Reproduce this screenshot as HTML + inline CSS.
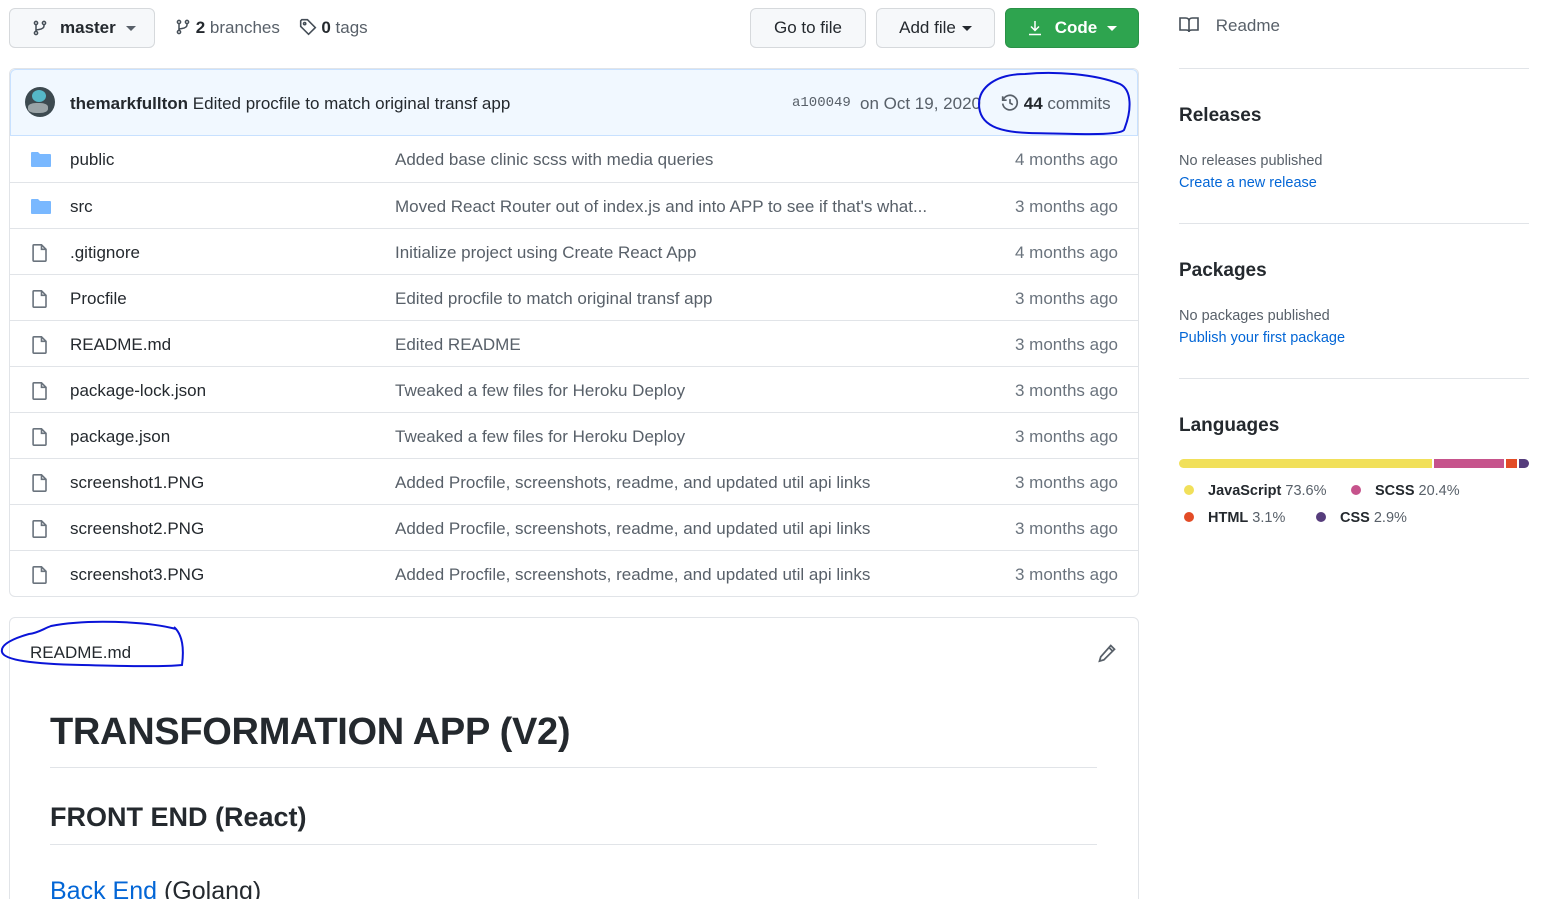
<!DOCTYPE html>
<html><head><meta charset="utf-8"><style>
*{box-sizing:border-box;margin:0;padding:0}
html,body{width:1556px;height:899px;overflow:hidden}
body{background:#fff;font-family:"Liberation Sans",sans-serif;color:#24292e;position:relative}
.a{position:absolute;white-space:nowrap}
.btn{position:absolute;border:1px solid #d6d9dc;border-radius:6px;background:#f6f8fa;font-size:17px;display:flex;align-items:center;justify-content:center;color:#24292e}
.row{position:absolute;left:10px;width:1128px;height:46px;border-top:1px solid #e1e4e8;font-size:17px}
.row span{position:absolute;top:14px}
.n{left:60px;color:#24292e}
.m{left:385px;color:#586069}
.t{right:20px;color:#6a737d}
.ic{position:absolute;left:20px;top:14px}
.hr{position:absolute;height:1px;background:#e1e4e8}
.dot{display:inline-block;width:10px;height:10px;border-radius:50%;margin-right:14px;vertical-align:0}
</style></head><body>

<div class="btn" style="left:9px;top:8px;width:146px;height:40px;font-weight:bold;justify-content:flex-start;padding-left:22px">
<svg width="16" height="16" viewBox="0 0 16 16" fill="none" stroke="#444d56" stroke-width="1.5"><circle cx="4" cy="3" r="1.6"/><circle cx="4" cy="13" r="1.6"/><circle cx="12" cy="3" r="1.6"/><path d="M4 4.6v6.8M12 4.6v1.4c0 2-2 3-5 3.5S4 10 4 11.4"/></svg>
<span style="margin-left:12px">master</span><span style="margin-left:10px;border:5px solid transparent;border-top:5px solid #586069;margin-top:5px"></span></div>
<div class="a" style="left:175px;top:18px;font-size:17px;color:#586069">
<svg width="16" height="16" viewBox="0 0 16 16" fill="none" stroke="#444d56" stroke-width="1.5" style="vertical-align:-2px"><circle cx="4" cy="3" r="1.6"/><circle cx="4" cy="13" r="1.6"/><circle cx="12" cy="3" r="1.6"/><path d="M4 4.6v6.8M12 4.6v1.4c0 2-2 3-5 3.5S4 10 4 11.4"/></svg>
<b style="color:#24292e">2</b> branches
<span style="margin-left:14px"><svg width="18" height="18" viewBox="0 0 16 16" fill="none" stroke="#444d56" stroke-width="1.4" style="vertical-align:-3px"><path d="M1.5 2.5v5l7 7 6-6-7-7h-5z"/><circle cx="5" cy="5" r="1"/></svg> <b style="color:#24292e">0</b> tags</span></div>

<div class="btn" style="left:750px;top:8px;width:116px;height:40px">Go to file</div>
<div class="btn" style="left:876px;top:8px;width:119px;height:40px">Add file<span style="margin-left:6px;border:5px solid transparent;border-top:5px solid #24292e;margin-top:5px"></span></div>
<div class="btn" style="left:1005px;top:8px;width:134px;height:40px;background:#2ea44f;border-color:#2a9147;color:#fff;font-weight:bold">
<svg width="16" height="16" viewBox="0 0 16 16" fill="none" stroke="#fff" stroke-width="1.5"><path d="M8 1v9M4 6.5l4 4 4-4M2 14.5h12"/></svg>
<span style="margin-left:12px">Code</span><span style="margin-left:10px;border:5px solid transparent;border-top:5px solid #fff;margin-top:5px"></span></div>

<div style="position:absolute;left:9px;top:68px;width:1130px;height:529px;border:1px solid #e1e4e8;border-radius:6px"></div>
<div style="position:absolute;left:10px;top:69px;width:1128px;height:67px;background:#f1f8ff;border-radius:6px 6px 0 0;border:1px solid #c8e1ff"></div>
<div class="a" style="left:25px;top:87px;width:30px;height:30px;border-radius:50%;background:#3d4a50;overflow:hidden"><div style="position:absolute;left:7px;top:3px;width:14px;height:12px;border-radius:50%;background:#55b8c8"></div><div style="position:absolute;left:3px;top:16px;width:20px;height:10px;border-radius:40%;background:#9aa3a6"></div></div>
<div class="a" style="left:70px;top:94px;font-size:17px"><b>themarkfullton</b> Edited procfile to match original transf app</div>
<div class="a" style="left:792px;top:95px;font-size:14px;font-family:'Liberation Mono',monospace;color:#586069">a100049</div>
<div class="a" style="left:860px;top:94px;font-size:17px;color:#586069">on Oct 19, 2020</div>
<div class="a" style="left:1001px;top:94px;font-size:17px;color:#586069">
<svg width="18" height="18" viewBox="0 0 16 16" fill="none" stroke="#586069" stroke-width="1.5" style="vertical-align:-3px"><path d="M1.8 5.5A6.5 6.5 0 1 1 1.5 8.5M1.5 2v3.5H5M8 4.5V8l2.5 1.5"/></svg>
<b style="color:#24292e">44</b> commits</div>
<svg class="a" style="left:975px;top:68px" width="160" height="68" viewBox="0 0 160 68" fill="none" stroke="#0a14d8" stroke-width="2"><path d="M50 6c30-3 70 0 95 10 12 6 12 26 4 46-5 6-50 4-95 3C25 64 4 58 4 36 4 20 20 6 50 6z"/></svg>

<div class="row" style="top:136px;border-top:none"><svg class="ic" width="22" height="20" viewBox="0 0 22 20"><path d="M1 3q0-1 1-1h6l2 2h10q1 0 1 1v11q0 1-1 1H2q-1 0-1-1z" fill="#79b8ff"/></svg><span class="n">public</span><span class="m">Added base clinic scss with media queries</span><span class="t">4 months ago</span></div>
<div class="row" style="top:182px"><svg class="ic" width="22" height="20" viewBox="0 0 22 20"><path d="M1 3q0-1 1-1h6l2 2h10q1 0 1 1v11q0 1-1 1H2q-1 0-1-1z" fill="#79b8ff"/></svg><span class="n">src</span><span class="m">Moved React Router out of index.js and into APP to see if that's what...</span><span class="t">3 months ago</span></div>
<div class="row" style="top:228px"><svg class="ic" width="20" height="20" viewBox="0 0 20 20" fill="none" stroke="#6a737d" stroke-width="1.6"><path d="M4 1.8h7.5l4.5 4.5v11q0 .9-.9.9H4q-.9 0-.9-.9V2.7q0-.9.9-.9zM11.5 1.8v4.5H16"/></svg><span class="n">.gitignore</span><span class="m">Initialize project using Create React App</span><span class="t">4 months ago</span></div>
<div class="row" style="top:274px"><svg class="ic" width="20" height="20" viewBox="0 0 20 20" fill="none" stroke="#6a737d" stroke-width="1.6"><path d="M4 1.8h7.5l4.5 4.5v11q0 .9-.9.9H4q-.9 0-.9-.9V2.7q0-.9.9-.9zM11.5 1.8v4.5H16"/></svg><span class="n">Procfile</span><span class="m">Edited procfile to match original transf app</span><span class="t">3 months ago</span></div>
<div class="row" style="top:320px"><svg class="ic" width="20" height="20" viewBox="0 0 20 20" fill="none" stroke="#6a737d" stroke-width="1.6"><path d="M4 1.8h7.5l4.5 4.5v11q0 .9-.9.9H4q-.9 0-.9-.9V2.7q0-.9.9-.9zM11.5 1.8v4.5H16"/></svg><span class="n">README.md</span><span class="m">Edited README</span><span class="t">3 months ago</span></div>
<div class="row" style="top:366px"><svg class="ic" width="20" height="20" viewBox="0 0 20 20" fill="none" stroke="#6a737d" stroke-width="1.6"><path d="M4 1.8h7.5l4.5 4.5v11q0 .9-.9.9H4q-.9 0-.9-.9V2.7q0-.9.9-.9zM11.5 1.8v4.5H16"/></svg><span class="n">package-lock.json</span><span class="m">Tweaked a few files for Heroku Deploy</span><span class="t">3 months ago</span></div>
<div class="row" style="top:412px"><svg class="ic" width="20" height="20" viewBox="0 0 20 20" fill="none" stroke="#6a737d" stroke-width="1.6"><path d="M4 1.8h7.5l4.5 4.5v11q0 .9-.9.9H4q-.9 0-.9-.9V2.7q0-.9.9-.9zM11.5 1.8v4.5H16"/></svg><span class="n">package.json</span><span class="m">Tweaked a few files for Heroku Deploy</span><span class="t">3 months ago</span></div>
<div class="row" style="top:458px"><svg class="ic" width="20" height="20" viewBox="0 0 20 20" fill="none" stroke="#6a737d" stroke-width="1.6"><path d="M4 1.8h7.5l4.5 4.5v11q0 .9-.9.9H4q-.9 0-.9-.9V2.7q0-.9.9-.9zM11.5 1.8v4.5H16"/></svg><span class="n">screenshot1.PNG</span><span class="m">Added Procfile, screenshots, readme, and updated util api links</span><span class="t">3 months ago</span></div>
<div class="row" style="top:504px"><svg class="ic" width="20" height="20" viewBox="0 0 20 20" fill="none" stroke="#6a737d" stroke-width="1.6"><path d="M4 1.8h7.5l4.5 4.5v11q0 .9-.9.9H4q-.9 0-.9-.9V2.7q0-.9.9-.9zM11.5 1.8v4.5H16"/></svg><span class="n">screenshot2.PNG</span><span class="m">Added Procfile, screenshots, readme, and updated util api links</span><span class="t">3 months ago</span></div>
<div class="row" style="top:550px"><svg class="ic" width="20" height="20" viewBox="0 0 20 20" fill="none" stroke="#6a737d" stroke-width="1.6"><path d="M4 1.8h7.5l4.5 4.5v11q0 .9-.9.9H4q-.9 0-.9-.9V2.7q0-.9.9-.9zM11.5 1.8v4.5H16"/></svg><span class="n">screenshot3.PNG</span><span class="m">Added Procfile, screenshots, readme, and updated util api links</span><span class="t">3 months ago</span></div>

<div style="position:absolute;left:9px;top:617px;width:1130px;height:320px;border:1px solid #e1e4e8;border-radius:6px"></div>
<div class="a" style="left:30px;top:643px;font-size:17px">README.md</div>
<svg class="a" style="left:0;top:620px" width="190" height="50" viewBox="0 0 190 50" fill="none" stroke="#0a14d8" stroke-width="2"><path d="M176 9c-30-8-90-10-125-3-8 3-13 7-22 8C15 18 0 24 2 32c2 8 30 12 80 13 40 1 80 2 100 0 2-15 1-30-8-38"/></svg>
<svg class="a" style="left:1097px;top:643px" width="20" height="20" viewBox="0 0 16 16" fill="none" stroke="#586069" stroke-width="1.4"><path d="M11 2l3 3-8.5 8.5L2 14.5l1-3.5z M9.5 3.5l3 3"/></svg>
<div class="a" style="left:50px;top:711px;font-size:38px;font-weight:bold;letter-spacing:-0.3px">TRANSFORMATION APP (V2)</div>
<div class="hr" style="left:50px;top:767px;width:1047px"></div>
<div class="a" style="left:50px;top:802px;font-size:27px;font-weight:bold">FRONT END (React)</div>
<div class="hr" style="left:50px;top:844px;width:1047px"></div>
<div class="a" style="left:50px;top:877px;font-size:25px"><span style="color:#0366d6">Back End</span> (Golang)</div>

<div class="a" style="left:1179px;top:16px;font-size:17px;color:#586069">
<svg width="20" height="18" viewBox="0 0 20 18" fill="none" stroke="#444d56" stroke-width="1.6" style="vertical-align:-3px"><path d="M1 2h5.5Q10 2 10 5v11Q10 14 7 14H1zM19 2h-5.5Q10 2 10 5v11q0-2 3-2h6z"/></svg>
<span style="margin-left:12px">Readme</span></div>
<div class="hr" style="left:1179px;top:68px;width:350px"></div>
<div class="a" style="left:1179px;top:105px;font-size:19px;font-weight:bold">Releases</div>
<div class="a" style="left:1179px;top:153px;font-size:14.5px;color:#586069">No releases published</div>
<div class="a" style="left:1179px;top:175px;font-size:14.5px;color:#0366d6">Create a new release</div>
<div class="hr" style="left:1179px;top:223px;width:350px"></div>
<div class="a" style="left:1179px;top:260px;font-size:19px;font-weight:bold">Packages</div>
<div class="a" style="left:1179px;top:308px;font-size:14.5px;color:#586069">No packages published</div>
<div class="a" style="left:1179px;top:330px;font-size:14.5px;color:#0366d6">Publish your first package</div>
<div class="hr" style="left:1179px;top:378px;width:350px"></div>
<div class="a" style="left:1179px;top:415px;font-size:19px;font-weight:bold">Languages</div>
<div class="a" style="left:1179px;top:459px;width:350px;height:9px;border-radius:5px;overflow:hidden;display:flex">
<div style="width:73.6%;background:#f1e05a;margin-right:2px"></div><div style="width:20.4%;background:#c6538c;margin-right:2px"></div><div style="width:3.1%;background:#e34c26;margin-right:2px"></div><div style="width:2.9%;background:#563d7c"></div></div>
<div class="a" style="left:1184px;top:483px;font-size:14.5px;color:#586069"><span class="dot" style="background:#f1e05a"></span><b style="color:#24292e;font-weight:600">JavaScript</b> 73.6%</div>
<div class="a" style="left:1351px;top:483px;font-size:14.5px;color:#586069"><span class="dot" style="background:#c6538c"></span><b style="color:#24292e;font-weight:600">SCSS</b> 20.4%</div>
<div class="a" style="left:1184px;top:510px;font-size:14.5px;color:#586069"><span class="dot" style="background:#e34c26"></span><b style="color:#24292e;font-weight:600">HTML</b> 3.1%</div>
<div class="a" style="left:1316px;top:510px;font-size:14.5px;color:#586069"><span class="dot" style="background:#563d7c"></span><b style="color:#24292e;font-weight:600">CSS</b> 2.9%</div>
</body></html>
